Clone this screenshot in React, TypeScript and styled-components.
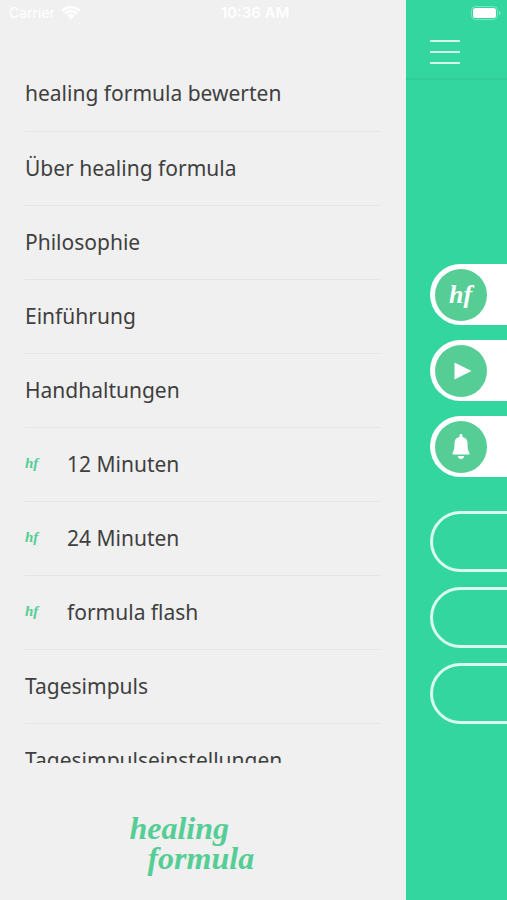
import React from 'react';
import styled, { createGlobalStyle } from 'styled-components';

const GlobalStyle = createGlobalStyle`
  *, *::before, *::after { box-sizing: border-box; }
  body {
    margin: 0;
    background: #33d69f;
    font-family: 'Noto Sans', 'Open Sans', sans-serif;
  }
`;

const Screen = styled.div`
  position: relative;
  display: grid;
  grid-template-columns: 4fr 1fr;
  height: 100vh;
  overflow: hidden;
`;

const StatusBar = styled.div`
  position: absolute;
  inset: 0 0 auto 0;
  z-index: 1;
  display: grid;
  grid-template-columns: 1fr auto 1fr;
  align-items: center;
  height: 26px;
  padding: 0 6px 0 9px;
  color: #ffffff;
  font-family: Inter, sans-serif;
  font-size: 15px;
  line-height: 20px;
  pointer-events: none;
`;

const Carrier = styled.div`
  display: flex;
  align-items: center;
  gap: 6px;
  font-size: 14px;
`;

const Clock = styled.time`
  font-weight: 600;
`;

const BatterySlot = styled.div`
  display: flex;
  justify-content: flex-end;
`;

const Drawer = styled.aside`
  display: flex;
  flex-direction: column;
  min-width: 0;
  min-height: 0;
  padding: 57px 25px 0;
  background: #f0f0f0;
`;

const MenuNav = styled.nav`
  flex: 1;
  min-height: 0;
  overflow: hidden;
`;

const MenuList = styled.ul`
  margin: 0;
  padding: 0;
  list-style: none;
`;

const MenuItem = styled.li`
  & + & {
    border-top: 1px solid #e4e4e4;
  }
`;

const MenuLink = styled.a`
  display: flex;
  align-items: center;
  height: 73px;
  padding-bottom: 2px;
  color: #3f3f3f;
  font-size: 21px;
  line-height: 30px;
  text-decoration: none;
  white-space: nowrap;

  ${MenuItem}:first-child & {
    height: 74px;
  }
`;

const Monogram = styled.span<{ $size: 'small' | 'large' }>`
  color: ${({ $size }) => ($size === 'small' ? '#55cd95' : '#ffffff')};
  font-family: 'Liberation Serif', serif;
  font-size: ${({ $size }) => ($size === 'small' ? '15px' : '26px')};
  font-style: italic;
  font-weight: 700;
  line-height: 1;
`;

const MenuIcon = styled.span`
  display: flex;
  flex: none;
  width: 42px;
`;

const Brand = styled.footer`
  display: flex;
  flex: none;
  justify-content: center;
  height: 137px;
  padding: 50px 22px 0 0;
`;

const Wordmark = styled.div`
  color: #55cd95;
  font-family: 'Liberation Serif', serif;
  font-size: 32px;
  font-style: italic;
  font-weight: 700;
  line-height: 30px;
`;

const WordLine = styled.span<{ $indent?: boolean }>`
  display: block;
  padding-left: ${({ $indent }) => ($indent ? '18px' : '0')};
`;

const Page = styled.main`
  min-width: 0;
  overflow: hidden;
  background: #33d69f;
`;

const TopBar = styled.header`
  height: 80px;
  padding: 36px 24px 0;
  border-bottom: 2px solid #2fcc97;
`;

const MenuButton = styled.button`
  display: flex;
  flex-direction: column;
  justify-content: center;
  gap: 9px;
  width: 30px;
  height: 32px;
  padding: 0;
  border: 0;
  background: none;
`;

const MenuStroke = styled.span`
  height: 2px;
  background: #d3f7e9;
`;

const PillGroup = styled.div<{ $first?: boolean }>`
  display: flex;
  flex-direction: column;
  gap: 15px;
  padding: ${({ $first }) => ($first ? '184px' : '34px')} 0 0 24px;
`;

const Pill = styled.button<{ $filled?: boolean }>`
  display: flex;
  flex: none;
  align-items: center;
  width: 400%;
  height: 61px;
  padding: 0 5px;
  border: ${({ $filled }) => ($filled ? '0' : '3px solid #d9fbf0')};
  border-radius: 31px;
  background: ${({ $filled }) => ($filled ? '#ffffff' : 'transparent')};
`;

const PillBadge = styled.span`
  display: flex;
  align-items: center;
  justify-content: center;
  width: 52px;
  height: 52px;
  border-radius: 50%;
  background: #55cd95;
`;

const menu = [
  { label: 'healing formula bewerten' },
  { label: 'Über healing formula' },
  { label: 'Philosophie' },
  { label: 'Einführung' },
  { label: 'Handhaltungen' },
  { label: '12 Minuten', marked: true },
  { label: '24 Minuten', marked: true },
  { label: 'formula flash', marked: true },
  { label: 'Tagesimpuls' },
  { label: 'Tagesimpulseinstellungen' },
];

const WifiIcon = () => (
  <svg width="20" height="14" viewBox="0 0 20 14" fill="#ffffff" aria-hidden="true">
    <path d="M10 0C6.200 0 2.700 1.500 0.300 3.900L2.100 5.700C4.200 3.700 7 2.600 10 2.600s5.800 1.100 7.900 3.100l1.800-1.800C17.300 1.500 13.800 0 10 0Z" />
    <path d="M10 3.700c-2.600 0-5 1-6.900 2.800l2.100 2.100C6.400 7.500 8.100 6.800 10 6.800s3.600.7 4.800 1.800l2.100-2.100C15 4.700 12.600 3.700 10 3.700Z" />
    <path d="M10 8c-1.500 0-2.800.5-3.800 1.500L10 13.500l3.800-4C12.800 8.500 11.500 8 10 8Z" />
  </svg>
);

const BatteryIcon = () => (
  <svg width="30" height="14" viewBox="0 0 30 14" aria-hidden="true">
    <rect x="0.500" y="0.500" width="26" height="13" rx="4" fill="none" stroke="#ffffff" strokeOpacity="0.350" />
    <rect x="2" y="2" width="23" height="10" rx="2.500" fill="#ffffff" />
    <path d="M28 5c1 .3 1.500 1.100 1.500 2S29 8.700 28 9Z" fill="#ffffff" fillOpacity="0.400" />
  </svg>
);

const PlayIcon = () => (
  <svg width="22" height="20" viewBox="0 0 22 20" fill="#ffffff" aria-hidden="true">
    <path d="M4.500 1.500 21.500 10 4.500 18.500Z" />
  </svg>
);

const BellIcon = () => (
  <svg width="18" height="26" viewBox="0 0 18 26" fill="#ffffff" aria-hidden="true">
    <path d="M9 0c.9 0 1.500.7 1.500 1.500v1.400c3.200.7 5 3 5 5.900 0 5.200.5 8.400 2 10.100V20.500H.5V18.900C2 17.200 2.500 14 2.500 8.800c0-2.900 1.800-5.200 5-5.900V1.500C7.500.7 8.100 0 9 0Z" />
    <path d="M5.800 22h6.400c-.2 1.900-1.500 3-3.200 3s-3-1.100-3.200-3Z" />
  </svg>
);

export default function App() {
  return (
    <>
      <GlobalStyle />
      <Screen>
        <StatusBar>
          <Carrier>
            <span>Carrier</span>
            <WifiIcon />
          </Carrier>
          <Clock>10:36 AM</Clock>
          <BatterySlot>
            <BatteryIcon />
          </BatterySlot>
        </StatusBar>

        <Drawer>
          <MenuNav>
            <MenuList>
              {menu.map(({ label, marked }) => (
                <MenuItem key={label}>
                  <MenuLink href="#">
                    {marked && (
                      <MenuIcon>
                        <Monogram $size="small">hf</Monogram>
                      </MenuIcon>
                    )}
                    {label}
                  </MenuLink>
                </MenuItem>
              ))}
            </MenuList>
          </MenuNav>
          <Brand>
            <Wordmark>
              <WordLine>healing</WordLine>
              <WordLine $indent>formula</WordLine>
            </Wordmark>
          </Brand>
        </Drawer>

        <Page>
          <TopBar>
            <MenuButton aria-label="Menü">
              <MenuStroke />
              <MenuStroke />
              <MenuStroke />
            </MenuButton>
          </TopBar>
          <PillGroup $first>
            <Pill $filled aria-label="healing formula">
              <PillBadge>
                <Monogram $size="large">hf</Monogram>
              </PillBadge>
            </Pill>
            <Pill $filled aria-label="Abspielen">
              <PillBadge>
                <PlayIcon />
              </PillBadge>
            </Pill>
            <Pill $filled aria-label="Erinnerung">
              <PillBadge>
                <BellIcon />
              </PillBadge>
            </Pill>
          </PillGroup>
          <PillGroup>
            <Pill aria-label="12 Minuten" />
            <Pill aria-label="24 Minuten" />
            <Pill aria-label="formula flash" />
          </PillGroup>
        </Page>
      </Screen>
    </>
  );
}
